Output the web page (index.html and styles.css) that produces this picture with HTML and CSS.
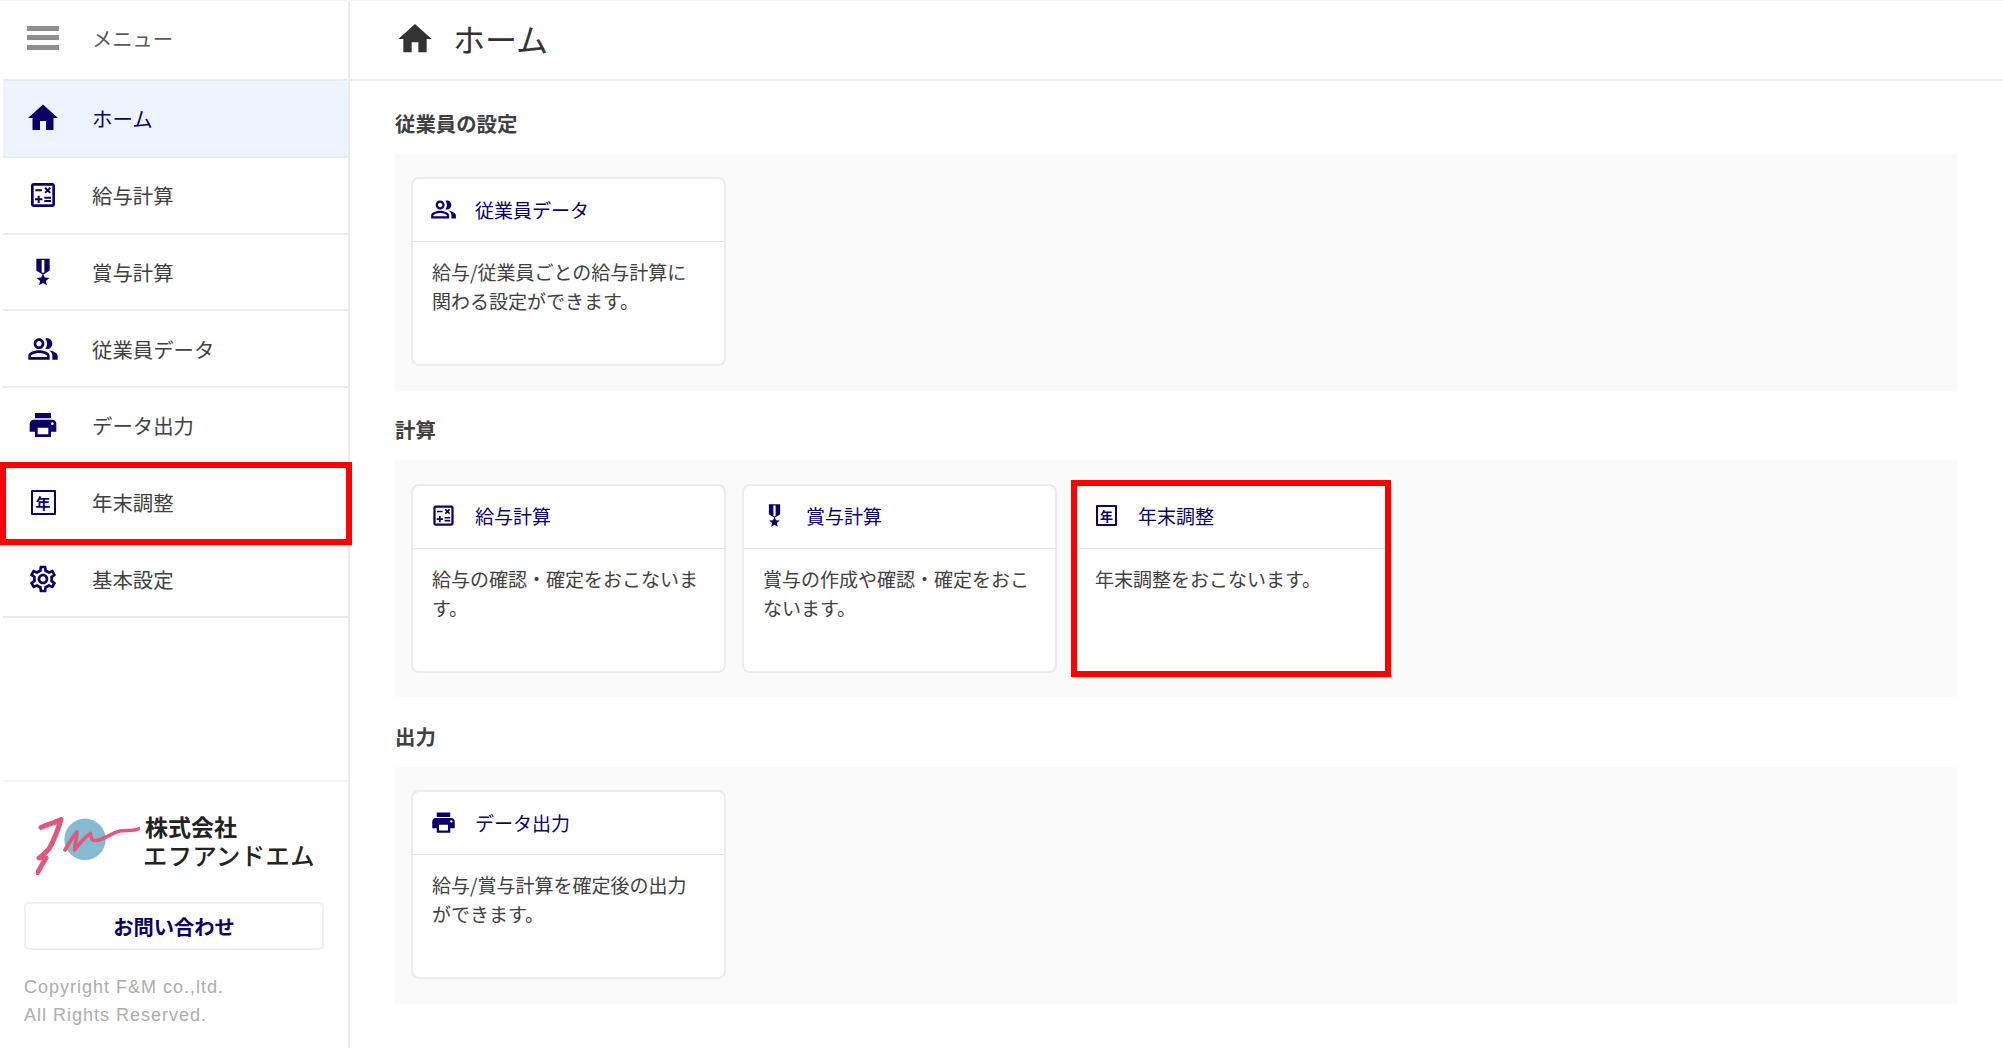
FILE: index.html
```html
<!DOCTYPE html>
<html lang="ja">
<head>
<meta charset="utf-8">
<title>ホーム</title>
<link rel="stylesheet" href="styles.css">
</head>
<body>
<svg class="defs" width="0" height="0" aria-hidden="true">
  <symbol id="i-home" viewBox="0 0 24 24"><path d="M10 20v-6h4v6h5v-8h3L12 3 2 12h3v8z"/></symbol>
  <symbol id="i-calc" viewBox="0 0 24 24"><path d="M19 3H5c-1.1 0-2 .9-2 2v14c0 1.1.9 2 2 2h14c1.1 0 2-.9 2-2V5c0-1.1-.9-2-2-2zm0 16H5V5h14v14z"/><path d="M6.25 7.72h5v1.5h-5zM13 15.75h5v1.5h-5zM13 13.25h5v1.5h-5zM8 18h1.5v-2h2v-1.5h-2v-2H8v2H6V16h2zM14.09 10.95l1.41-1.41 1.41 1.41 1.06-1.06-1.41-1.42 1.41-1.41L16.91 6 15.5 7.41 14.09 6l-1.06 1.06 1.41 1.41-1.41 1.42z"/></symbol>
  <symbol id="i-medal" viewBox="0 0 24 24"><path d="M17 10.43V2H7v8.43c0 .35.18.68.49.86l4.18 2.51-.99 2.34-3.41.29 2.59 2.24L9.07 22 12 20.23 14.93 22l-.78-3.33 2.59-2.24-3.41-.29-.99-2.34 4.18-2.51c.3-.18.48-.5.48-.86zM13 12.23l-1 .6-1-.6V3h2v9.23z"/></symbol>
  <symbol id="i-people" viewBox="0 0 24 24"><path d="M16.67 13.13C18.04 14.06 19 15.32 19 17v3h4v-3c0-2.18-3.57-3.47-6.33-3.87z"/><path d="M15 12c2.21 0 4-1.79 4-4s-1.79-4-4-4c-.47 0-.91.1-1.33.24C14.5 5.27 15 6.58 15 8s-.5 2.73-1.33 3.76c.42.14.86.24 1.33.24z"/><path d="M9 12c2.21 0 4-1.79 4-4s-1.79-4-4-4-4 1.79-4 4 1.79 4 4 4zm0-6c1.1 0 2 .9 2 2s-.9 2-2 2-2-.9-2-2 .9-2 2-2z"/><path d="M9 13c-2.67 0-8 1.34-8 4v3h16v-3c0-2.66-5.33-4-8-4zm6 5H3v-.99C3.2 16.29 6.3 15 9 15s5.8 1.29 6 2v1z"/></symbol>
  <symbol id="i-print" viewBox="0 0 24 24"><path d="M19 8H5c-1.66 0-3 1.34-3 3v6h4v4h12v-4h4v-6c0-1.66-1.34-3-3-3zm-3 11H8v-5h8v5zm3-7c-.55 0-1-.45-1-1s.45-1 1-1 1 .45 1 1-.45 1-1 1zm-1-9H6v4h12V3z"/></symbol>
  <symbol id="i-gear" viewBox="0 0 24 24"><path d="M19.43 12.98c.04-.32.07-.64.07-.98 0-.34-.03-.66-.07-.98l2.11-1.65c.19-.15.24-.42.12-.64l-2-3.46c-.09-.16-.26-.25-.44-.25-.06 0-.12.01-.17.03l-2.49 1c-.52-.4-1.08-.73-1.69-.98l-.38-2.65C14.46 2.18 14.25 2 14 2h-4c-.25 0-.46.18-.49.42l-.38 2.65c-.61.25-1.17.59-1.69.98l-2.49-1c-.06-.02-.12-.03-.18-.03-.17 0-.34.09-.43.25l-2 3.46c-.13.22-.07.49.12.64l2.11 1.65c-.04.32-.07.65-.07.98 0 .33.03.66.07.98l-2.11 1.65c-.19.15-.24.42-.12.64l2 3.46c.09.16.26.25.44.25.06 0 .12-.01.17-.03l2.49-1c.52.4 1.08.73 1.69.98l.38 2.65c.03.24.24.42.49.42h4c.25 0 .46-.18.49-.42l.38-2.65c.61-.25 1.17-.59 1.69-.98l2.49 1c.06.02.12.03.18.03.17 0 .34-.09.43-.25l2-3.46c.12-.22.07-.49-.12-.64l-2.11-1.65zm-1.98-1.71c.04.31.05.52.05.73 0 .21-.02.43-.05.73l-.14 1.13.89.7 1.08.84-.7 1.21-1.27-.51-1.04-.42-.9.68c-.43.32-.84.56-1.25.73l-1.06.43-.16 1.13-.2 1.35h-1.4l-.19-1.35-.16-1.13-1.06-.43c-.43-.18-.83-.41-1.23-.71l-.91-.7-1.06.43-1.27.51-.7-1.21 1.08-.84.89-.7-.14-1.13c-.03-.31-.05-.54-.05-.74s.02-.43.05-.73l.14-1.13-.89-.7-1.08-.84.7-1.21 1.27.51 1.04.42.9-.68c.43-.32.84-.56 1.25-.73l1.06-.43.16-1.13.2-1.35h1.39l.19 1.35.16 1.13 1.06.43c.43.18.83.41 1.23.71l.91.7 1.06-.43 1.27-.51.7 1.21-1.07.85-.89.7.14 1.13zM12 8c-2.21 0-4 1.79-4 4s1.79 4 4 4 4-1.79 4-4-1.79-4-4-4zm0 6c-1.1 0-2-.9-2-2s.9-2 2-2 2 .9 2 2-.9 2-2 2z"/></symbol>
</svg>

<div class="app">
  <aside class="sidebar">
    <div class="menu-head">
      <span class="burger"><i></i><i></i><i></i></span>
      <span class="menu-label">メニュー</span>
    </div>
    <nav class="nav">
      <a class="nav-item is-active"><svg class="icon icon-home"><use href="#i-home"/></svg><span>ホーム</span></a>
      <a class="nav-item"><svg class="icon"><use href="#i-calc"/></svg><span>給与計算</span></a>
      <a class="nav-item"><svg class="icon"><use href="#i-medal"/></svg><span>賞与計算</span></a>
      <a class="nav-item"><svg class="icon"><use href="#i-people"/></svg><span>従業員データ</span></a>
      <a class="nav-item"><svg class="icon"><use href="#i-print"/></svg><span>データ出力</span></a>
      <a class="nav-item is-marked"><span class="icon year-nav"><b>年</b></span><span>年末調整</span></a>
      <a class="nav-item"><svg class="icon"><use href="#i-gear"/></svg><span>基本設定</span></a>
    </nav>
    <div class="side-foot">
      <div class="logo">
        <svg class="logo-mark" viewBox="0 0 104 60" width="104" height="60" aria-hidden="true">
          <circle cx="49" cy="24.3" r="20.7" fill="#85bad3"/>
          <path class="logo-stroke" d="M5 12.5 C12 9 19 8 25 4.5 C22 15 18 25 13 34 C9 38 6 41 3 43 C6 42 9 42 10 43 C7 48 4 53 1.5 58"/>
          <path class="logo-stroke logo-wave" d="M29 35 C33 28 37 21 41 17 C41 23 39 29 38.5 35 C43 29 49 22 54.5 18.5 C54.5 23 56 26 60 25.5 C68 25 75 18 84 16 C91 15 98 16.5 103 13.5"/>
        </svg>
        <div class="logo-text">
          <span class="logo-line1">株式会社</span>
          <span class="logo-line2">エフアンドエム</span>
        </div>
      </div>
      <a class="contact">お問い合わせ</a>
      <p class="copyright">Copyright F&amp;M co.,ltd.<br>All Rights Reserved.</p>
    </div>
  </aside>

  <main class="main">
    <header class="page-head">
      <svg class="page-icon"><use href="#i-home"/></svg>
      <h1 class="page-title">ホーム</h1>
    </header>
    <div class="content">
      <section>
        <h2 class="sec-title">従業員の設定</h2>
        <div class="panel">
          <article class="card">
            <div class="card-head"><svg class="card-icon"><use href="#i-people"/></svg><span>従業員データ</span></div>
            <p class="card-body">給与/従業員ごとの給与計算に関わる設定ができます。</p>
          </article>
        </div>
      </section>
      <section>
        <h2 class="sec-title">計算</h2>
        <div class="panel">
          <article class="card">
            <div class="card-head"><svg class="card-icon"><use href="#i-calc"/></svg><span>給与計算</span></div>
            <p class="card-body">給与の確認・確定をおこないます。</p>
          </article>
          <article class="card">
            <div class="card-head"><svg class="card-icon"><use href="#i-medal"/></svg><span>賞与計算</span></div>
            <p class="card-body">賞与の作成や確認・確定をおこないます。</p>
          </article>
          <article class="card is-marked">
            <div class="card-head"><span class="card-icon year-card"><b>年</b></span><span>年末調整</span></div>
            <p class="card-body">年末調整をおこないます。</p>
          </article>
        </div>
      </section>
      <section>
        <h2 class="sec-title">出力</h2>
        <div class="panel">
          <article class="card">
            <div class="card-head"><svg class="card-icon"><use href="#i-print"/></svg><span>データ出力</span></div>
            <p class="card-body">給与/賞与計算を確定後の出力ができます。</p>
          </article>
        </div>
      </section>
    </div>
  </main>
</div>
</body>
</html>
```

FILE: styles.css
```css
* { box-sizing: border-box; }
html, body { margin: 0; height: 100%; background: #fff; }
body {
  font-family: "Noto Sans CJK JP", "Liberation Sans", sans-serif;
  color: #404040;
  overflow: hidden;
}
.defs { position: absolute; }

.app { display: flex; height: 1048px; border-top: 1px solid #f7f7f7; }

/* Sidebar */
.sidebar {
  width: 350px;
  flex: none;
  display: flex;
  flex-direction: column;
  padding-left: 3px;
  border-right: 2px solid #ececec;
}
.menu-head {
  height: 80px;
  flex: none;
  display: flex;
  align-items: center;
  padding: 0 0 5px 24px;
  gap: 33px;
  border-bottom: 2px solid #ececec;
}
.burger { display: flex; flex-direction: column; gap: 4.5px; width: 32px; }
.burger i { display: block; height: 5px; background: #8f8f8f; }
.menu-label { font-size: 20.3px; color: #595959; }

.nav { display: flex; flex-direction: column; }
.nav-item {
  position: relative;
  height: 76.75px;
  display: flex;
  align-items: center;
  padding-left: 24px;
  gap: 33px;
  font-size: 20.4px;
  color: #404040;
  border-bottom: 2px solid #ececec;
}
.nav-item.is-active { background: #edf4ff; color: #0a0066; }
.icon { width: 32px; height: 32px; fill: #0a0066; flex: none; }
.icon-home { width: 36px; height: 36px; margin: -2px; }

.is-marked::after {
  content: "";
  position: absolute;
  border: 6px solid #ff0000;
  pointer-events: none;
}
.nav-item.is-marked::after { top: -3px; right: -4px; bottom: -5px; left: -3px; }

.year-nav, .year-card {
  display: flex;
  align-items: center;
  justify-content: center;
  color: #0a0066;
}
.year-nav b, .year-card b {
  display: flex;
  align-items: center;
  justify-content: center;
  border: 2.5px solid #0a0066;
  border-radius: 1px;
  font-weight: 700;
  line-height: 1;
}
.year-nav b { width: 25px; height: 25px; font-size: 15px; }
.year-card b { width: 21px; height: 21px; border-width: 2px; font-size: 13px; }

.side-foot {
  margin-top: auto;
  height: 268px;
  flex: none;
  border-top: 2px solid #f5f5f5;
  padding: 33px 0 0 21px;
}
.logo { display: flex; align-items: flex-start; gap: 3px; padding-left: 12px; height: 87px; }
.logo-mark { flex: none; }
.logo-stroke { fill: none; stroke: #e2587c; stroke-width: 5; stroke-linejoin: round; stroke-linecap: round; }
.logo-wave { stroke-width: 3.6; }
.logo-text { display: flex; flex-direction: column; color: #222; margin-top: -3px; }
.logo-line1 { font-size: 23px; font-weight: 700; line-height: 29px; padding-left: 2px; }
.logo-line2 { font-size: 24.3px; font-weight: 500; line-height: 27px; letter-spacing: .4px; white-space: nowrap; }
.contact {
  display: flex;
  align-items: center;
  justify-content: center;
  width: 300px;
  height: 48px;
  border: 2px solid #f0f0f0;
  border-radius: 5px;
  font-size: 20.3px;
  font-weight: 700;
  color: #0a0066;
}
.copyright {
  margin: 24px 0 0;
  font-family: "Liberation Sans", sans-serif;
  font-size: 18px;
  line-height: 27.5px;
  letter-spacing: 1px;
  color: #adadad;
}

/* Main */
.main { flex: 1; min-width: 0; display: flex; flex-direction: column; }
.page-head {
  height: 80px;
  flex: none;
  display: flex;
  align-items: center;
  gap: 18px;
  padding: 0 0 2px 45px;
  border-bottom: 2px solid #ececec;
}
.page-icon { width: 40px; height: 40px; fill: #333; flex: none; }
.page-title { margin: 0 0 2px; font-size: 32px; font-weight: 400; color: #333; }

.content { padding: 3px 46px 0 45px; }
.sec-title {
  margin: 0 0 16.17px;
  padding-top: 24.5px;
  font-size: 20.4px;
  font-weight: 700;
  line-height: 29px;
  color: #404040;
}
.panel {
  height: 237px;
  display: flex;
  gap: 16px;
  padding: 23.5px 16px;
  background: #fafafa;
}
.card {
  position: relative;
  width: 315px;
  height: 189px;
  flex: none;
  background: #fff;
  border: 2px solid #ececec;
  border-radius: 8px;
}
.card.is-marked { border-radius: 0; margin-left: 1px; }
.card.is-marked::after { top: -6px; right: -4px; bottom: -6px; left: -5px; }
.card-head {
  height: 63px;
  display: flex;
  align-items: center;
  gap: 18px;
  padding: 0 0 2px 17px;
  font-size: 19px;
  color: #0a0066;
  border-bottom: 1px solid #e6e6e6;
}
.card-icon { width: 27px; height: 27px; fill: #0a0066; flex: none; }
.card-body {
  margin: 0;
  padding: 16px 19px 0;
  font-size: 19px;
  line-height: 28.7px;
  color: #404040;
}
```
